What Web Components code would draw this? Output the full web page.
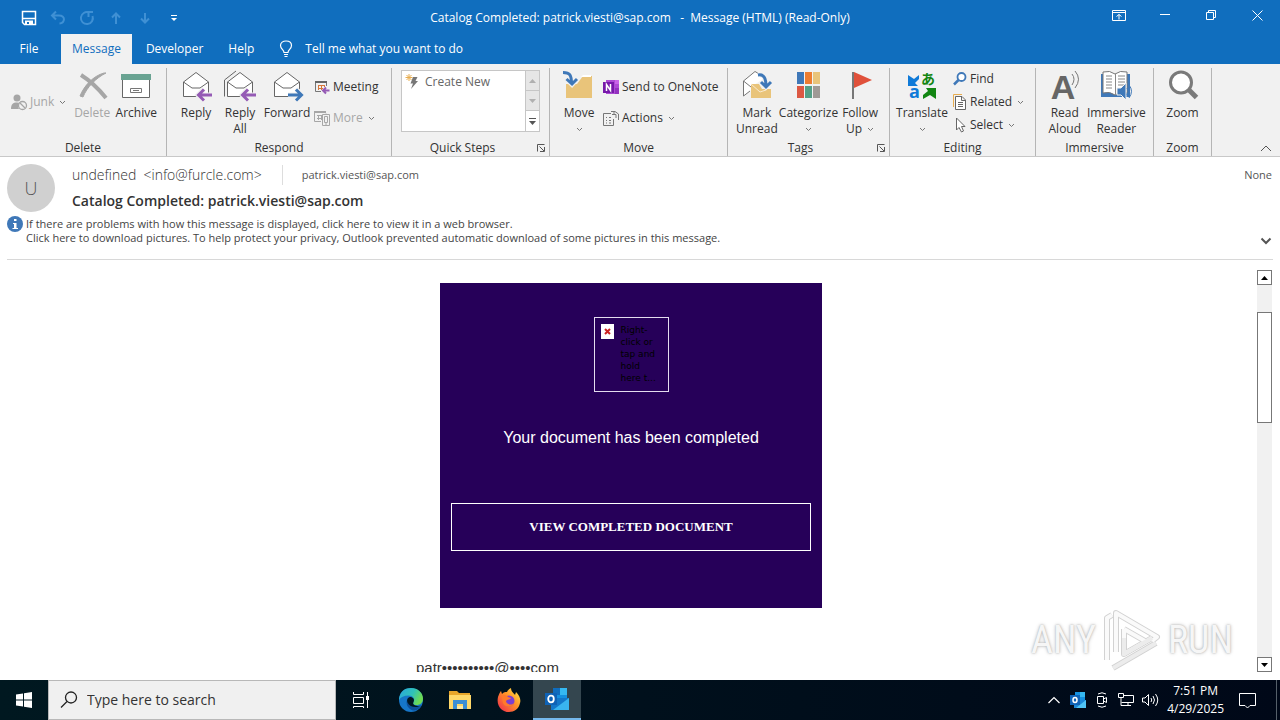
<!DOCTYPE html>
<html lang="en">
<head>
<meta charset="utf-8">
<title>Catalog Completed: patrick.viesti@sap.com - Message (HTML) (Read-Only)</title>
<style>
  html, body {
    height: 100%;
    margin: 0;
  }

  body {
    font-family: "Open Sans", "Noto Sans", sans-serif;
    font-size: 12px;
    line-height: 16px;
    color: #333333;
    background-color: white;
    overflow: hidden;
  }
</style>
</head>
<body>
<mail-desktop></mail-desktop>

<script>
/**
 * Drawings used by the app-icon element: [width, height, markup].
 */
const envelope = '<path d="M3.500 12 L16 2.500 L28.500 12 V26.500 H3.500 Z" fill="#fff" stroke="#666"/><path d="M3.500 12 L12 18 H20 L28.500 12" fill="none" stroke="#666"/>'

const icons = {
  save: [16, 16, '<path d="M1.500 1.500 H14.500 V14.500 H3.500 L1.500 12.500 Z" fill="none" stroke="#fff" stroke-width="1.500"/><path d="M2 8.500 H14" stroke="#fff" stroke-width="1.500"/><path d="M4 10.500 H12 V15 H4 Z" fill="#fff"/><path d="M6 12 h2 v2 h-2z" fill="#106ebe"/>'],
  undo: [16, 16, '<path d="M6 1.500 L2 5.500 L6 9.500 M2.500 5.500 H9 C16 5.500 15 13 9.500 13.500" fill="none" stroke="#3f90d4" stroke-width="2"/>'],
  redo: [16, 16, '<path d="M9.500 7 V2 H14 M10 2.500 A6 6 0 1 0 13.500 6" fill="none" stroke="#3f90d4" stroke-width="2"/>'],
  up: [16, 16, '<path d="M8 14 V3 M4 7.500 L8 3.500 L12 7.500" fill="none" stroke="#3f90d4" stroke-width="2"/>'],
  down: [16, 16, '<path d="M8 3 V13 M4 8.500 L8 12.500 L12 8.500" fill="none" stroke="#3f90d4" stroke-width="2"/>'],
  customize: [8, 8, '<path d="M1 1.500 H7" stroke="#fff"/><path d="M1 4 H7 L4 7 Z" fill="#fff"/>'],
  ribbonMode: [14, 11, '<path d="M.5 .5 H13.500 V10.500 H.5 Z M.5 2.500 H13.500 M7 9.500 V4.500 M4.500 6.500 L7 4.500 L9.500 6.500" fill="none" stroke="#fff"/>'],
  minimize: [10, 10, '<path d="M0 4.500 H10" stroke="#fff"/>'],
  restore: [10, 10, '<path d="M.5 2.500 H7.500 V9.500 H.5 Z M2.500 2.500 V.5 H9.500 V7.500 H7.500" fill="none" stroke="#fff"/>'],
  close: [11, 11, '<path d="M.5 .5 L10.500 10.500 M10.500 .5 L.5 10.500" fill="none" stroke="#fff"/>'],
  bulb: [14, 18, '<path d="M5 12.500 C5 9.500 1.500 9 1.500 5.500 C1.500 2.500 4 1 7 1 C10 1 12.500 2.500 12.500 5.500 C12.500 9 9 9.500 9 12.500 Z M5 14.500 H9 M5.500 16.500 H8.500" fill="none" stroke="#fff" stroke-width="1.200"/>'],
  chevron: [7, 5, '<path d="M1 1 L3.500 3.500 L6 1" fill="none" stroke="#777"/>'],
  collapse: [12, 7, '<path d="M1 6 L6 1 L11 6" fill="none" stroke="#555"/>'],
  expand: [12, 8, '<path d="M1.500 1.500 L6 6 L10.500 1.500" fill="none" stroke="#555" stroke-width="2"/>'],
  launcher: [8, 8, '<path d="M.5 7.500 V.5 H7.500 M2.500 2.500 L7 7 M7.500 3 V7.500 H3" fill="none" stroke="#555"/>'],
  junk: [16, 16, '<circle cx="6" cy="4" r="3.500" fill="#a6a6a6"/><path d="M0 15 C0 10 2 8.500 6 8.500 L9 9 C7 10 6.500 13 8 15 Z" fill="#a6a6a6"/><circle cx="11.500" cy="11.500" r="4" fill="#f1f1f1" stroke="#a6a6a6" stroke-width="1.300"/><path d="M9 9 L14 14" stroke="#a6a6a6" stroke-width="1.300"/>'],
  delete: [32, 32, '<path d="M5 5 C13 10 22 18 30 28" fill="none" stroke="#a6a6a6" stroke-width="4"/><path d="M30 3 C20 8 11 17 7 27 L4 26 C8 16 17 6 28 3 Z" fill="#a6a6a6" stroke="#a6a6a6"/>'],
  archive: [32, 32, '<path d="M2.500 9 H29.500 V27.500 H2.500 Z" fill="#fff" stroke="#666"/><path d="M1 4 H31 V10 H1 Z" fill="#69a392"/><path d="M10.500 18.500 H21.500 V22.500 H10.500 Z M13 20.500 H19" fill="none" stroke="#777"/>'],
  reply: [32, 32, envelope + '<path d="M32 25 H19 M24 19 L18 25 L24 31" fill="none" stroke="#f1f1f1" stroke-width="5"/><path d="M32 25 H19 M24 19.500 L18.500 25 L24 30.500" fill="none" stroke="#955bb5" stroke-width="3"/>'],
  replyAll: [32, 32, '<path d="M.5 26.500 V10 L12 1" fill="none" stroke="#666"/>' + envelope + '<path d="M32 25 H19 M24 19 L18 25 L24 31" fill="none" stroke="#f1f1f1" stroke-width="5"/><path d="M32 25 H19 M24 19.500 L18.500 25 L24 30.500" fill="none" stroke="#955bb5" stroke-width="3"/>'],
  forward: [32, 32, envelope + '<path d="M17 25 H30 M25 19 L31 25 L25 31" fill="none" stroke="#f1f1f1" stroke-width="5"/><path d="M17 25 H30 M25 19.500 L30.500 25 L25 30.500" fill="none" stroke="#3f78b8" stroke-width="3"/>'],
  meeting: [16, 16, '<path d="M1 2 H13 V4 H1 Z" fill="#666"/><path d="M1.500 4 V12.500 H7 M12.500 4 V7" fill="none" stroke="#777"/><path d="M4 6.500 H11 M4 9.500 H9 M4.500 6 V11 M7.500 6 V11 M10.500 6 V8" stroke="#d8763a"/><path d="M15.500 11.500 H9 M12 8.500 L9 11.500 L12 14.500" fill="none" stroke="#955bb5" stroke-width="2"/>'],
  more: [16, 16, '<path d="M0 1 H12 V3 H0 Z" fill="#a6a6a6"/><path d="M.5 3 V11.500 H7 M12 3.500 V5 M3 5.500 H8 M3 8.500 H8 M4.500 5 V10 M7.500 5 V10" fill="none" stroke="#a6a6a6"/><path d="M8.500 4.500 H15.500 V15.500 H8.500 Z" fill="#f1f1f1" stroke="#a6a6a6"/><path d="M10.500 6.500 H13.500 V12.500 H10.500 Z M11 14 H13" fill="none" stroke="#a6a6a6"/>'],
  quick: [16, 16, '<path d="M8 3 H12.500 L10.500 7 H13 L6 15 L8 9.500 H5.500 Z" fill="#777"/><path d="M4 0 V7 M.5 3.500 H7.500 M1.500 1 L6.500 6 M6.500 1 L1.500 6" stroke="#e8ad50"/>'],
  move: [32, 32, '<path d="M3 14 H14 L20 6 H29 V28 H3 Z" fill="#e9c47a"/><path d="M18 7 H28 V5 H20 Z" fill="#fff"/><path d="M1 1.500 C7 1.500 9 5 9 14 M3.500 9 L9 14.500 L14 9" fill="none" stroke="#f1f1f1" stroke-width="5"/><path d="M0 2.500 C7 2.500 8.500 5 8.500 14 M3.500 9 L9 14 L14 9" fill="none" stroke="#3f78b8" stroke-width="3"/>'],
  onenote: [16, 16, '<path d="M3 1 H16 V15 H3 Z" fill="#ae4bd5"/><path d="M12 1 H16 V5 H12 Z" fill="#ca64ea"/><path d="M12 9 H16 V15 H12 Z" fill="#9332bf"/><path d="M0 3 H11 V14 H0 Z" fill="#7719aa"/><path d="M3.500 12 V5.500 L7.500 11.500 V5" fill="none" stroke="#fff" stroke-width="1.500"/>'],
  actions: [16, 16, '<path d="M.5 3.500 H8 M.5 3.500 V15.500 H10.500 V9 M3 7.500 H4 M6 7.500 H8 M3 10.500 H4 M6 10.500 H8 M3 13 H4 M6 13 H8" fill="none" stroke="#777"/><path d="M8 1.500 H12 L15.500 4 V10 M9 4.500 H13 V8 M11 2 V4" fill="none" stroke="#777"/>'],
  unread: [32, 32, '<path d="M2.500 11 L14 1.500 L20 5 L22 9 L10 17 V20 L2.500 26 Z" fill="#fff"/><path d="M2.500 11 L14 1.500 L20 5 M2.500 11 V26 L9 21 M2.500 11 L10 17" fill="none" stroke="#777"/><path d="M10 14 H18 L21 19 H30 V28 H10 Z" fill="#e9c47a"/><path d="M10 14 L19 22 L25 20" fill="none" stroke="#f9ead0"/><path d="M17 4.500 C23 4 25 8 25 17 M20 12 L25 17 L30 12" fill="none" stroke="#f1f1f1" stroke-width="5"/><path d="M17 5 C23 4 25 8 25 17 M20 12 L25 17 L30 12" fill="none" stroke="#3f78b8" stroke-width="3"/>'],
  categorize: [32, 32, '<path d="M4 2 h7 v12 h-7z" fill="#3f78b8"/><path d="M12 2 h7 v12 h-7z" fill="#ed7d31"/><path d="M20 2 h7 v12 h-7z" fill="#e9c47a"/><path d="M4 16 h7 v12 h-7z" fill="#dc5843"/><path d="M12 16 h7 v12 h-7z" fill="#55a087"/><path d="M20 16 h7 v12 h-7z" fill="#a09a96"/>'],
  flag: [32, 32, '<path d="M9 2 V29" stroke="#777" stroke-width="2"/><path d="M10 2 L28 10 L10 18 Z" fill="#e0513b"/>'],
  translate: [32, 32, '<path d="M2 5 V16 H12 L9 13 L13 9 V5 L8 9 Z" fill="#0f7ad8"/><path d="M30 29 V18 H20 L22 21 L17 25 V29 L24 25 Z" fill="#138613"/>'],
  find: [14, 14, '<circle cx="8.500" cy="5" r="4" fill="#fff" stroke="#3f78b8" stroke-width="1.800"/><path d="M5.500 8 L1 12.500" stroke="#3f78b8" stroke-width="2.500"/>'],
  related: [14, 16, '<path d="M.5 13 V.5 H9" fill="none" stroke="#e8ad50"/><path d="M2.500 2.500 H9 L12.500 6 V15.500 H2.500 Z M8.500 3 V6.500 H12.500 M5 8.500 H10 M5 10.500 H10 M5 12.500 H10" fill="#fff" stroke="#666"/>'],
  select: [14, 16, '<path d="M3.500 1 V13 L6 10.500 L8.500 15 L10.500 14 L8.500 9.500 H12 Z" fill="#fff" stroke="#666"/>'],
  readAloud: [32, 32, '<path d="M23 4 Q27 9 23 15 M26 1 Q33 9 26 18" fill="none" stroke="#777"/>'],
  reader: [32, 32, '<path d="M1 4 H30 V27 H1 Z" fill="#3f78b8"/><path d="M3 2 Q10 0 15 4 Q20 0 27 2 V23 Q20 21 15 25 Q10 21 3 23 Z" fill="#fff" stroke="#777"/><path d="M15.500 4 V25 M6 6 H12 M6 9 H12 M6 12 H12 M6 15 H12 M6 18 H12 M18 6 H25 M18 9 H25 M18 12 H25 M18 15 H25" stroke="#888"/><path d="M17 18 H21 L26 13 V30 L21 25 H17 Z" fill="#3f78b8" stroke="#f1f1f1"/><path d="M27 18 Q30 21 27 25 M29 15 Q34 21 29 28" fill="none" stroke="#3f78b8"/>'],
  zoom: [32, 32, '<circle cx="14" cy="12.500" r="10.500" fill="#fff" stroke="#7a7a7a" stroke-width="3"/><path d="M21 19 L29.500 27.500" stroke="#7a7a7a" stroke-width="5"/>'],
  info: [16, 16, '<circle cx="8" cy="8" r="8" fill="#3f78b8"/><path d="M7 3 h2.500 v2 h-2.500z M6 7 H9.500 V12 H11 V13 H5.500 V12 H7 V8 H6 Z" fill="#fff"/>'],
  arrowUp: [7, 4, '<path d="M0 4 L3.500 0 L7 4 Z" fill="currentColor"/>'],
  arrowDown: [7, 4, '<path d="M0 0 L3.500 4 L7 0 Z" fill="currentColor"/>'],
  galleryMore: [7, 7, '<path d="M0 .5 H7" stroke="currentColor"/><path d="M0 3 L3.500 7 L7 3 Z" fill="currentColor"/>'],
  broken: [13, 15, '<path d="M0 0 H13 V15 H0 Z" fill="#fff"/><path d="M4 5 L9 10 M9 5 L4 10" stroke="#c22" stroke-width="2"/>'],
  windows: [16, 16, '<path d="M0 2.500 L7 1.500 V7.500 H0 Z M8 1.300 L16 0 V7.500 H8 Z M0 8.500 H7 V14.500 L0 13.500 Z M8 8.500 H16 V16 L8 14.700 Z" fill="#fff"/>'],
  search: [18, 18, '<circle cx="11" cy="6.500" r="5.500" fill="none" stroke="#222" stroke-width="1.300"/><path d="M7 10.500 L1 16.500" stroke="#222" stroke-width="1.300"/>'],
  taskView: [18, 16, '<path d="M1.500 0 V2.500 H11.500 V0 M1.500 5.500 H11.500 V11.500 H1.500 Z M1.500 16 V14.500 H11.500 V16" fill="none" stroke="#fff"/><path d="M15.500 0 V16" stroke="#fff"/><path d="M14 4 h3 v4 h-3z" fill="#fff"/>'],
  edge: [24, 24, '<defs><linearGradient id="e" x1="0" y1="0" x2="1" y2=".4"><stop offset="0" stop-color="#2aa6e0"/><stop offset=".6" stop-color="#2fc2b8"/><stop offset="1" stop-color="#6edb52"/></linearGradient></defs><circle cx="12" cy="12" r="12" fill="#1676c8"/><path d="M0 11 C1 3 6 0 12 0 C19 0 24 5 24 10.500 C24 15 21 17 17.500 17 C14 17 13.500 15.500 14.500 14 C16.500 11 14 7.500 9.500 7.500 C5 7.500 1.500 9 0 12 Z" fill="url(#e)"/><path d="M8 12 C6.500 16 9 21 14 22.500 C18 23 21 20 22.500 17.500 C19 20 10 19.500 8 12 Z" fill="#0c4f9a"/><path d="M14.500 14 C16 11.500 14 9 11 9 C8.500 9.500 7.500 12 8.500 14.500 C10 18 14 19.500 18 19 L22.500 17.500 C20 18.500 12.500 18 14.500 14 Z" fill="#001620"/>'],
  explorer: [22, 20, '<path d="M0 1 H8 L10 3 H21 V19 H0 Z" fill="#e8a62a"/><path d="M0 5 H22 V19 H0 Z" fill="#ffd869"/><path d="M4 10 H18 V19 H14 V14 H8 V19 H4 Z" fill="#3c8fd4"/><path d="M8 16 H14 V19 H8 Z" fill="#ffe9a0"/>'],
  firefox: [24, 24, '<defs><linearGradient id="f" x1="1" y1="0" x2="0" y2="1"><stop offset="0" stop-color="#fff04a"/><stop offset=".45" stop-color="#ff9128"/><stop offset="1" stop-color="#ef2350"/></linearGradient></defs><path d="M1 9 C2 6 3 4 4 3 L5 6 C7 4 8 4 10 4 C11 2 12 1 14 0 C14 4 17 5 18 7 L19 4 C23 8 24 12 23 15 C22 21 17 24 12 24 C5 24 -1 18 1 9 Z" fill="url(#f)"/><circle cx="12" cy="13" r="5.500" fill="#7c3fd1"/><path d="M4 8 C7 6 10 7 11 9 L14 10 C13 12 10 11 9 13 C9 16 14 18 17 15 C16 20 8 20 6 15 C5 12 6 10 4 8 Z" fill="#ff7a2b"/>'],
  outlook: [24, 24, '<path d="M8 1 H22 V14 H8 Z" fill="#1490df"/><path d="M8 1 H15 V8 H8 Z" fill="#0f6cbd"/><path d="M15 1 H22 V8 H15 Z" fill="#35b8f1"/><path d="M6 11 L24 11 V23 H6 Z" fill="#1377c9"/><path d="M24 11 L8 23 H24 Z" fill="#39b4ef"/><path d="M0 6 H12 V18 H0 Z" fill="#0f62b5"/><ellipse cx="6" cy="12" rx="2.800" ry="3.300" fill="none" stroke="#fff" stroke-width="1.800"/>'],
  outlookTray: [16, 16, '<path d="M5 0 H15 V9 H5 Z" fill="#1490df"/><path d="M10 0 H15 V5 H10 Z" fill="#35b8f1"/><path d="M4 8 H16 V16 H4 Z" fill="#1b86d6"/><path d="M16 8 L6 16 H16 Z" fill="#50c4f5"/><path d="M0 3 H10 V13 H0 Z" fill="#0f62b5"/><ellipse cx="5" cy="8" rx="2" ry="2.500" fill="none" stroke="#fff" stroke-width="1.500"/>'],
  trayUp: [12, 8, '<path d="M.5 7 L6 1.500 L11.500 7" fill="none" stroke="#fff" stroke-width="1.200"/>'],
  camera: [12, 16, '<path d="M1.500 4.500 H7.500 V11.500 H1.500 Z M7.500 7 L10.500 5.500 V10.500 L7.500 9 M2 2 Q6 -.5 10 2 M2 14 Q6 16.500 10 14" fill="none" stroke="#fff"/>'],
  network: [16, 16, '<path d="M6 3.500 H15.500 V10.500 H3.500 M10 11 V13.500 M6 13.500 H13 M.5 1.500 H5.500 V5.500 H.5 Z M3 6 V13.500 H7" fill="none" stroke="#fff"/>'],
  volume: [17, 14, '<path d="M.5 5 H3 L6.500 1.500 V12.500 L3 9 H.5 Z M9 5 Q10.500 7 9 9 M11 3 Q14 7 11 11 M13.500 1 Q18 7 13.500 13" fill="none" stroke="#fff"/>'],
  notify: [17, 17, '<path d="M.5 1.500 H16.500 V13.500 H11 L8.500 16 L6 13.500 H.5 Z" fill="none" stroke="#fff"/>'],
  play: [58, 64, '<g fill="none" stroke-linejoin="round"><path d="M4 52 V10 L9 7 M13 44 V5 L54 29 L49 33 M21 21 V46 L49 30 M21 21 L42 33 M10 60 L53 35" stroke="#d2d2d2" stroke-width="6"/><path d="M4 52 V10 L9 7 M13 44 V5 L54 29 L49 33 M21 21 V46 L49 30 M21 21 L42 33" stroke="#fafafa" stroke-width="4"/><path d="M21 30 V46 L49 30 M10 60 L53 35" stroke="#ececec" stroke-width="4"/></g>']
}

/**
 * Attaches an open shadow root holding a copy of the given markup.
 *
 * @param {HTMLElement} host - The element that gets the shadow root.
 * @param {string} markup - Styles and elements.
 */
function render (host, markup) {
  const template = document.createElement('template')
  template.innerHTML = markup
  host.attachShadow({ mode: 'open' }).appendChild(template.content.cloneNode(true))
}

// Buttons look plain everywhere in this window
const plainButton = `
  button {
    display: flex;
    align-items: center;
    justify-content: center;
    margin: 0;
    padding: 0;
    border: none;
    background: none;
    color: inherit;
    font: inherit;
  }
`

/**
 * Draws one of the icons above.
 */
customElements.define('app-icon',
  class extends HTMLElement {
    connectedCallback () {
      if (this.shadowRoot) return
      const [width, height, shapes] = icons[this.getAttribute('name')]
      render(this, `
        <style>
          :host { display: block; flex: none; }
          svg { display: block; overflow: visible; }
        </style>
        <svg width="${width}" height="${height}" viewBox="0 0 ${width} ${height}" aria-hidden="true">${shapes}</svg>
      `)
    }
  }
)

/**
 * Button of the ribbon. Large by default, one line with the attribute small.
 */
customElements.define('ribbon-button',
  class extends HTMLElement {
    connectedCallback () {
      if (this.shadowRoot) return
      const menu = this.getAttribute('menu')
      const chevron = '<app-icon name="chevron"></app-icon>'
      render(this, `
        <style>
          ${plainButton}
          :host { display: block; width: 44px; color: #333333; }
          :host([medium]) { width: 50px; }
          :host([wide]) { width: 60px; }
          :host([small]) { width: auto; }
          :host([disabled]) { color: #a6a6a6; }
          button {
            flex-direction: column;
            width: 100%;
            white-space: nowrap;
          }
          .icon {
            position: relative;
            height: 32px;
            margin-bottom: 3px;
          }
          .label { display: flex; flex-direction: column; align-items: center; }
          .menu { display: flex; align-items: center; gap: 5px; min-height: 16px; }
          :host([small]) button { flex-direction: row; justify-content: flex-start; gap: 3px; }
          :host([small]) .icon { height: auto; min-width: 14px; margin: 0; }
          :host([small]) .label { flex-direction: row; gap: 5px; }
          ::slotted([slot=glyphs]) { position: absolute; }
        </style>
        <button type="button"${this.hasAttribute('disabled') ? ' disabled' : ''}>
          <span class="icon"><app-icon name="${this.getAttribute('icon')}"></app-icon><slot name="glyphs"></slot></span>
          <span class="label">
            <span><slot></slot></span>
            ${menu !== null ? `<span class="menu">${menu ? `<span>${menu}</span>` : ''}${chevron}</span>` : ''}
          </span>
        </button>
      `)
    }
  }
)

/**
 * Group of the ribbon with its name below.
 */
customElements.define('ribbon-group',
  class extends HTMLElement {
    connectedCallback () {
      if (this.shadowRoot) return
      render(this, `
        <style>
          ${plainButton}
          :host {
            display: flex;
            flex-direction: column;
            box-sizing: border-box;
            height: 88px;
            border-right: 1px solid #b5b5b5;
          }
          .content { display: flex; flex: 1; padding: 2px 7px 0; }
          .foot { display: flex; align-items: center; }
          .foot button { width: 16px; height: 16px; }
          h2 { flex: 1; margin: 0; font: inherit; text-align: center; }
        </style>
        <div class="content"><slot></slot></div>
        <div class="foot">
          <h2>${this.getAttribute('label')}</h2>
          ${this.hasAttribute('launcher') ? '<button type="button" aria-label="Options"><app-icon name="launcher"></app-icon></button>' : ''}
        </div>
      `)
    }
  }
)

/**
 * Stack of small buttons.
 */
customElements.define('button-stack',
  class extends HTMLElement {
    constructor () {
      super()
      render(this, `
        <style>
          :host {
            display: flex;
            flex-direction: column;
            gap: 15px;
            padding: 9px 0 0 2px;
          }
          :host([dense]) { gap: 7px; padding: 1px 0 0 6px; }
          :host([single]) { padding: 24px 4px 0 4px; }
        </style>
        <slot></slot>
      `)
    }
  }
)

/**
 * List of quick steps.
 */
customElements.define('quick-steps',
  class extends HTMLElement {
    constructor () {
      super()
      render(this, `
        <style>
          ${plainButton}
          :host {
            display: flex;
            box-sizing: border-box;
            flex: 1;
            height: 62px;
            margin: 0 2px;
            border: 1px solid #c6c6c6;
            background-color: white;
            color: #666666;
          }
          .list { flex: 1; padding: 3px; }
          .list button { gap: 4px; }
          .scroll { display: grid; grid-template-rows: 20px 20px 20px; width: 14px; }
          .scroll button { background-color: #e6e6e6; border-left: 1px solid #c6c6c6; border-bottom: 1px solid #c6c6c6; color: #b0b0b0; }
          .scroll button:last-child { background-color: white; border-bottom: none; color: #555555; }
        </style>
        <div class="list"><button type="button"><app-icon name="quick"></app-icon>Create New</button></div>
        <div class="scroll">
          <button type="button" aria-label="Row up"><app-icon name="arrowUp"></app-icon></button>
          <button type="button" aria-label="Row down"><app-icon name="arrowDown"></app-icon></button>
          <button type="button" aria-label="More"><app-icon name="galleryMore"></app-icon></button>
        </div>
      `)
    }
  }
)

/**
 * The blue bar with the window title and the ribbon tabs.
 */
customElements.define('title-bar',
  class extends HTMLElement {
    constructor () {
      super()
      render(this, `
        <style>
          ${plainButton}
          :host { display: block; background-color: #106ebe; color: white; }
          .top { display: grid; grid-template-columns: 1fr auto 1fr; height: 34px; }
          .quick { display: flex; align-items: center; padding-left: 14px; }
          .quick button { width: 29px; height: 34px; }
          h1 { margin: 0; font: inherit; line-height: 36px; white-space: pre; }
          .window { display: flex; justify-content: flex-end; }
          .window button { width: 46px; height: 30px; }
          .tabs { display: flex; gap: 3px; height: 30px; }
          .tabs button { padding: 0 11px; }
          .tabs button:first-child { min-width: 58px; }
          .tabs .active { background-color: #f1f1f1; color: #106ebe; }
          label { display: flex; align-items: center; gap: 12px; margin-left: 11px; }
          input { width: 180px; padding: 0; border: none; background: none; font: inherit; color: white; }
          input::placeholder { color: white; opacity: 1; }
        </style>
        <div class="top">
          <div class="quick">
            <button type="button" aria-label="Save"><app-icon name="save"></app-icon></button>
            <button type="button" aria-label="Undo"><app-icon name="undo"></app-icon></button>
            <button type="button" aria-label="Redo"><app-icon name="redo"></app-icon></button>
            <button type="button" aria-label="Previous"><app-icon name="up"></app-icon></button>
            <button type="button" aria-label="Next"><app-icon name="down"></app-icon></button>
            <button type="button" aria-label="Customize"><app-icon name="customize"></app-icon></button>
          </div>
          <h1>Catalog Completed: patrick.viesti@sap.com   -  Message (HTML) (Read-Only)</h1>
          <div class="window">
            <button type="button" aria-label="Ribbon display"><app-icon name="ribbonMode"></app-icon></button>
            <button type="button" aria-label="Minimize"><app-icon name="minimize"></app-icon></button>
            <button type="button" aria-label="Restore"><app-icon name="restore"></app-icon></button>
            <button type="button" aria-label="Close"><app-icon name="close"></app-icon></button>
          </div>
        </div>
        <nav class="tabs">
          <button type="button">File</button>
          <button type="button" class="active">Message</button>
          <button type="button">Developer</button>
          <button type="button">Help</button>
          <label><app-icon name="bulb"></app-icon><input type="text" placeholder="Tell me what you want to do" aria-label="Tell me what you want to do"></label>
        </nav>
      `)
    }
  }
)

/**
 * The ribbon.
 */
customElements.define('message-ribbon',
  class extends HTMLElement {
    constructor () {
      super()
      render(this, `
        <style>
          ${plainButton}
          :host {
            display: grid;
            grid-template-columns: 167px 225px 158px 178px 162px 146px 118px 58px 1fr;
            box-sizing: border-box;
            height: 93px;
            padding-top: 4px;
            border-bottom: 1px solid #c8c8c8;
            background-color: #f1f1f1;
            color: #333333;
          }
          .end { display: flex; align-items: flex-end; justify-content: flex-end; padding: 0 8px 4px 0; }
          .kana { left: 15px; top: 0; font: bold 14px/16px "Noto Sans CJK JP", sans-serif; color: #138613; }
          .latin { left: 3px; top: 12px; font: bold 18px/18px "Open Sans", sans-serif; color: #0f7ad8; }
          .letter { left: 2px; top: 0; font: bold 34px/34px "Liberation Sans", sans-serif; color: #666666; }
        </style>
        <ribbon-group label="Delete">
          <button-stack single><ribbon-button small disabled icon="junk" menu>Junk</ribbon-button></button-stack>
          <ribbon-button disabled icon="delete">Delete</ribbon-button>
          <ribbon-button icon="archive">Archive</ribbon-button>
        </ribbon-group>
        <ribbon-group label="Respond">
          <ribbon-button icon="reply">Reply</ribbon-button>
          <ribbon-button icon="replyAll">Reply<br>All</ribbon-button>
          <ribbon-button medium icon="forward">Forward</ribbon-button>
          <button-stack>
            <ribbon-button small icon="meeting">Meeting</ribbon-button>
            <ribbon-button small disabled icon="more" menu>More</ribbon-button>
          </button-stack>
        </ribbon-group>
        <ribbon-group label="Quick Steps" launcher><quick-steps></quick-steps></ribbon-group>
        <ribbon-group label="Move">
          <ribbon-button icon="move" menu>Move</ribbon-button>
          <button-stack>
            <ribbon-button small icon="onenote">Send to OneNote</ribbon-button>
            <ribbon-button small icon="actions" menu>Actions</ribbon-button>
          </button-stack>
        </ribbon-group>
        <ribbon-group label="Tags" launcher>
          <ribbon-button icon="unread">Mark<br>Unread</ribbon-button>
          <ribbon-button wide icon="categorize" menu>Categorize</ribbon-button>
          <ribbon-button icon="flag" menu="Up">Follow</ribbon-button>
        </ribbon-group>
        <ribbon-group label="Editing">
          <ribbon-button medium icon="translate" menu>Translate<span slot="glyphs" class="kana">あ</span><span slot="glyphs" class="latin">a</span></ribbon-button>
          <button-stack dense>
            <ribbon-button small icon="find">Find</ribbon-button>
            <ribbon-button small icon="related" menu>Related</ribbon-button>
            <ribbon-button small icon="select" menu>Select</ribbon-button>
          </button-stack>
        </ribbon-group>
        <ribbon-group label="Immersive">
          <ribbon-button icon="readAloud">Read<br>Aloud<span slot="glyphs" class="letter">A</span></ribbon-button>
          <ribbon-button wide icon="reader">Immersive<br>Reader</ribbon-button>
        </ribbon-group>
        <ribbon-group label="Zoom"><ribbon-button icon="zoom">Zoom</ribbon-button></ribbon-group>
        <div class="end"><button type="button" aria-label="Collapse the ribbon"><app-icon name="collapse"></app-icon></button></div>
      `)
    }
  }
)

/**
 * Sender, recipient, subject and the info bar.
 */
customElements.define('message-header',
  class extends HTMLElement {
    constructor () {
      super()
      render(this, `
        <style>
          ${plainButton}
          :host {
            display: block;
            box-sizing: border-box;
            height: 103px;
            margin: 0 7px;
            padding: 7px 1px 0 0;
            border-bottom: 1px solid #d8d8d8;
            color: #555555;
            font-size: 11px;
          }
          .who { display: flex; gap: 17px; }
          .avatar {
            width: 48px;
            height: 48px;
            border-radius: 50%;
            background-color: #d0d0d0;
            font-size: 18px;
            font-weight: 300;
            line-height: 48px;
            text-align: center;
          }
          .lines { flex: 1; }
          .line { display: flex; align-items: center; height: 22px; }
          .from {
            padding-right: 20px;
            border-right: 1px solid #dddddd;
            font-size: 14px;
            font-weight: 300;
            line-height: 20px;
            color: #333333;
          }
          .to { flex: 1; padding-left: 19px; }
          h2 { margin: 0; font-size: 14px; font-weight: 600; line-height: 30px; color: #333333; }
          .info { display: flex; gap: 3px; line-height: 14px; color: #444444; }
          p { flex: 1; margin: 1px 0 0; }
          .info button { align-self: flex-end; }
        </style>
        <div class="who">
          <div class="avatar">U</div>
          <div class="lines">
            <div class="line"><span class="from">undefined &nbsp;&lt;info@furcle.com&gt;</span><span class="to">patrick.viesti@sap.com</span><span>None</span></div>
            <h2>Catalog Completed: patrick.viesti@sap.com</h2>
          </div>
        </div>
        <div class="info">
          <app-icon name="info"></app-icon>
          <p>If there are problems with how this message is displayed, click here to view it in a web browser.<br>Click here to download pictures. To help protect your privacy, Outlook prevented automatic download of some pictures in this message.</p>
          <button type="button" aria-label="Expand header"><app-icon name="expand"></app-icon></button>
        </div>
      `)
    }
  }
)

/**
 * The message itself with its scroll bar.
 */
customElements.define('message-body',
  class extends HTMLElement {
    constructor () {
      super()
      render(this, `
        <style>
          ${plainButton}
          :host { display: flex; flex: 1; min-height: 0; padding: 10px 8px 8px 5px; }
          .page { flex: 1; overflow: hidden; }
          .mail { width: 430px; margin: 13px auto 0; font-family: "Liberation Sans", sans-serif; }
          .card {
            display: flex;
            flex-direction: column;
            align-items: center;
            box-sizing: border-box;
            width: 382px;
            margin: 0 auto 50px;
            padding: 34px 11px 57px;
            background-color: #260059;
            color: white;
          }
          .picture {
            display: flex;
            gap: 7px;
            box-sizing: border-box;
            width: 75px;
            height: 75px;
            padding: 6px;
            border: 1px solid #e3dcee;
            color: black;
            font: 9px/12px "DejaVu Sans", sans-serif;
          }
          h2 { margin: 35px 0 54px; font-weight: normal; font-size: 16px; line-height: 22px; }
          a {
            align-self: stretch;
            border: 1px solid white;
            color: white;
            font: bold 13px/46px "Liberation Serif", serif;
            text-align: center;
            text-decoration: none;
          }
          .address { margin: 0; font-size: 15px; line-height: 20px; color: #333333; }
          .bar { display: flex; flex-direction: column; width: 15px; background-color: #f1f1f1; color: black; }
          .bar button, .thumb { box-sizing: border-box; border: 1px solid #777777; background-color: white; }
          .bar button { height: 15px; }
          .thumb { height: 111px; margin: 27px 0 auto; }
        </style>
        <div class="page">
          <div class="mail">
            <div class="card">
              <div class="picture"><app-icon name="broken"></app-icon><span>Right-click or tap and hold here t...</span></div>
              <h2>Your document has been completed</h2>
              <a href="#">VIEW COMPLETED DOCUMENT</a>
            </div>
            <p class="address">patr••••••••••@••••com</p>
          </div>
        </div>
        <div class="bar">
          <button type="button" aria-label="Scroll up"><app-icon name="arrowUp"></app-icon></button>
          <div class="thumb"></div>
          <button type="button" aria-label="Scroll down"><app-icon name="arrowDown"></app-icon></button>
        </div>
      `)
    }
  }
)

/**
 * The watermark over the message.
 */
customElements.define('water-mark',
  class extends HTMLElement {
    constructor () {
      super()
      render(this, `
        <style>
          :host {
            position: absolute;
            right: 47px;
            bottom: 48px;
            display: flex;
            align-items: center;
            gap: 7px;
            font: 38px/44px "Liberation Sans Narrow", "Roboto Condensed", "Liberation Sans", sans-serif;
            color: #f6f6f6;
            text-shadow: 0 0 2px #aaaaaa, 0 0 4px #d0d0d0;
          }
        </style>
        <span>ANY</span><app-icon name="play"></app-icon><span>RUN</span>
      `)
    }
  }
)

/**
 * The task bar.
 */
customElements.define('task-bar',
  class extends HTMLElement {
    constructor () {
      super()
      render(this, `
        <style>
          ${plainButton}
          :host {
            display: flex;
            height: 40px;
            background: linear-gradient(to right, #001820, #000818);
            color: white;
          }
          button { width: 49px; }
          .start { width: 48px; }
          .view { width: 50px; }
          .active { box-sizing: border-box; width: 48px; background-color: #34464f; border-bottom: 2px solid #76b9ed; }
          label {
            display: flex;
            align-items: center;
            gap: 9px;
            box-sizing: border-box;
            width: 288px;
            padding: 0 11px;
            border: 1px solid #b8b8b8;
            background-color: #f0f0f0;
          }
          input { flex: 1; min-width: 0; padding: 0; border: none; background: none; font: inherit; font-size: 14px; }
          input::placeholder { color: #333333; opacity: 1; }
          .tray { display: flex; align-items: center; gap: 8px; margin-left: auto; }
          .tray button { width: auto; min-width: 16px; }
          .tray .clock { display: block; text-align: center; line-height: 18px; }
          .tray .note { width: 30px; }
          .edge { align-self: stretch; border-left: 1px solid #55606a; width: 3px; margin-left: 6px; }
        </style>
        <button type="button" class="start" aria-label="Start"><app-icon name="windows"></app-icon></button>
        <label><app-icon name="search"></app-icon><input type="text" placeholder="Type here to search" aria-label="Type here to search"></label>
        <button type="button" class="view" aria-label="Task View"><app-icon name="taskView"></app-icon></button>
        <button type="button" aria-label="Edge"><app-icon name="edge"></app-icon></button>
        <button type="button" aria-label="File Explorer"><app-icon name="explorer"></app-icon></button>
        <button type="button" aria-label="Firefox"><app-icon name="firefox"></app-icon></button>
        <button type="button" class="active" aria-label="Outlook"><app-icon name="outlook"></app-icon></button>
        <div class="tray">
          <button type="button" aria-label="Hidden icons"><app-icon name="trayUp"></app-icon></button>
          <button type="button" aria-label="Outlook"><app-icon name="outlookTray"></app-icon></button>
          <button type="button" aria-label="Camera"><app-icon name="camera"></app-icon></button>
          <button type="button" aria-label="Network"><app-icon name="network"></app-icon></button>
          <button type="button" aria-label="Volume"><app-icon name="volume"></app-icon></button>
          <button type="button" class="clock">7:51 PM<br>4/29/2025</button>
          <button type="button" class="note" aria-label="Notifications"><app-icon name="notify"></app-icon></button>
          <span class="edge"></span>
        </div>
      `)
    }
  }
)

/**
 * The whole screen.
 */
customElements.define('mail-desktop',
  class extends HTMLElement {
    constructor () {
      super()
      render(this, `
        <style>
          :host {
            position: relative;
            display: flex;
            flex-direction: column;
            height: 100vh;
          }
        </style>
        <title-bar></title-bar>
        <message-ribbon></message-ribbon>
        <message-header></message-header>
        <message-body></message-body>
        <task-bar></task-bar>
        <water-mark></water-mark>
      `)
    }
  }
)
</script>
</body>
</html>
